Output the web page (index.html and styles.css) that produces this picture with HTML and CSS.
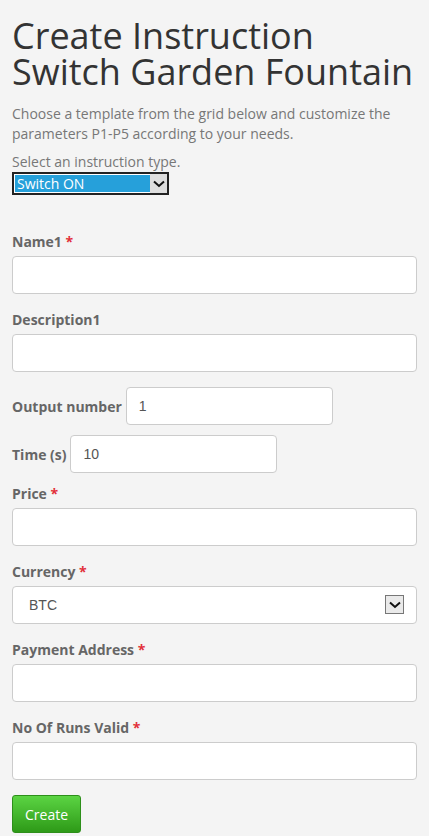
FILE: index.html
```html
<!DOCTYPE html>
<html lang="en">
<head>
<meta charset="utf-8">
<title>Create Instruction</title>
<link rel="stylesheet" href="styles.css">
</head>
<body>
<main class="page">
  <h1 class="title">Create Instruction Switch Garden Fountain</h1>
  <p class="intro">Choose a template from the grid below and customize the parameters P1-P5 according to your needs.</p>
  <div class="type-picker">
    <label class="type-label" for="type">Select an instruction type.</label>
    <div class="type-select-wrap">
      <select id="type" class="type-select"><option>Switch ON</option></select>
      <span class="type-arrow"><svg width="12" height="8" viewBox="0 0 12 8"><path d="M1 1.5 L6 6 L11 1.5" fill="none" stroke="#111" stroke-width="2"/></svg></span>
    </div>
  </div>

  <form class="form">
    <div class="group">
      <label class="label">Name1 <span class="req">*</span></label>
      <input class="control" type="text">
    </div>
    <div class="group">
      <label class="label">Description1</label>
      <input class="control" type="text">
    </div>
    <div class="group inline">
      <label class="label">Output number</label>
      <input class="control short" type="text" value="1">
    </div>
    <div class="group inline">
      <label class="label">Time (s)</label>
      <input class="control short" type="text" value="10">
    </div>
    <div class="group">
      <label class="label">Price <span class="req">*</span></label>
      <input class="control" type="text">
    </div>
    <div class="group">
      <label class="label">Currency <span class="req">*</span></label>
      <div class="select-wrap">
        <select class="control select"><option>BTC</option></select>
        <span class="select-arrow"><svg width="12" height="8" viewBox="0 0 12 8"><path d="M1 1.5 L6 6 L11 1.5" fill="none" stroke="#111" stroke-width="2"/></svg></span>
      </div>
    </div>
    <div class="group">
      <label class="label">Payment Address <span class="req">*</span></label>
      <input class="control" type="text">
    </div>
    <div class="group">
      <label class="label">No Of Runs Valid <span class="req">*</span></label>
      <input class="control" type="text">
    </div>
    <button class="btn" type="button">Create</button>
  </form>
</main>
</body>
</html>
```

FILE: styles.css
```css
* { box-sizing: border-box; }
html, body { margin: 0; padding: 0; background: #f4f4f4; }
body { font-family: "Open Sans", "Liberation Sans", sans-serif; font-size: 14px; color: #666; }
.page { padding: 0 12px; }
.title {
  margin: 0;
  padding-top: 18px;
  font-size: 36px;
  line-height: 36px;
  font-weight: 400;
  color: #333;
}
.intro { margin: 14px 0 0; line-height: 20px; color: #777; }
.type-picker { margin-top: 8px; display: flex; flex-direction: column; align-items: flex-start; }
.type-label { line-height: 20px; color: #777; }
.type-select-wrap { position: relative; width: 157px; height: 23px; }
.type-select {
  appearance: none; -webkit-appearance: none;
  width: 100%; height: 100%;
  margin: 0; padding: 0 0 0 3px;
  border: 2px solid #222; border-radius: 0;
  box-shadow: inset 0 0 0 1px #fff;
  background: #26a0da;
  color: #fff;
  font-family: "Open Sans", sans-serif; font-size: 14px;
}
.type-arrow {
  position: absolute; right: 2px; top: 2px; bottom: 2px; width: 17px;
  background: #dedede;
  display: flex; align-items: center; justify-content: center;
}
.form { margin-top: 36px; }
.group { margin-bottom: 15px; }
.label { display: block; line-height: 21px; margin-bottom: 4px; font-weight: 700; color: #666; }
.req { color: #e2303a; }
.control {
  display: block; width: 100%; height: 38px;
  margin: 0; padding: 0 12px;
  border: 1px solid #ccc; border-radius: 4px;
  background: #fff;
  font-family: "Liberation Sans", Arial, sans-serif; font-size: 14px; color: #555;
}
.group.inline { display: flex; align-items: center; gap: 4px; margin-bottom: 10px; }
.group.inline .label { margin-bottom: 0; }
.control.short { width: 207px; }
.select-wrap { position: relative; }
.select { appearance: none; -webkit-appearance: none; padding-left: 16px; }
.select-arrow {
  position: absolute; right: 13px; top: 9px; width: 19px; height: 19px;
  background: #eaeaea; border: 1px solid #777;
  display: flex; align-items: center; justify-content: center;
}
.btn {
  display: block;
  height: 38px; padding: 0 12px;
  border: 1px solid #2d8f1a; border-radius: 3px;
  background: linear-gradient(#5bd443, #2e9a18);
  color: #fff;
  font-family: "Open Sans", sans-serif; font-size: 14px;
}
```
